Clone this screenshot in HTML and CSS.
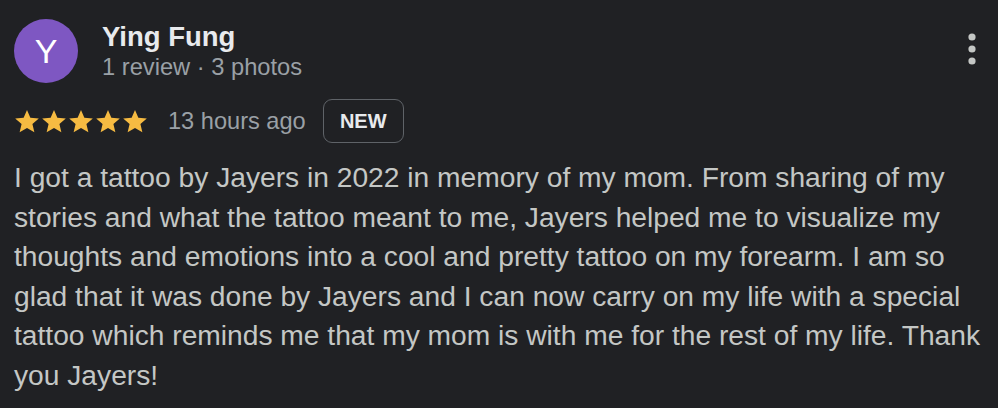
FILE: index.html
```html
<!DOCTYPE html>
<html lang="en">
<head>
<meta charset="utf-8">
<link rel="stylesheet" href="styles.css">
</head>
<body>
<div class="review">
  <div class="header">
    <div class="avatar">Y</div>
    <div class="who">
      <div class="name">Ying Fung</div>
      <div class="meta">1 review · 3 photos</div>
    </div>
    <button class="menu" aria-label="More">
      <svg width="8" height="32" viewBox="0 0 8 32"><circle cx="4" cy="4" r="3.6"/><circle cx="4" cy="16" r="3.6"/><circle cx="4" cy="28" r="3.6"/></svg>
    </button>
  </div>
  <div class="rating">
    <div class="stars">
      <svg viewBox="0 0 24 24" class="star"><path d="M12 1.8l3.1 7.2 7.8.7-5.9 5.1 1.8 7.6L12 18.4l-6.8 4 1.8-7.6-5.9-5.1 7.8-.7z"/></svg>
      <svg viewBox="0 0 24 24" class="star"><path d="M12 1.8l3.1 7.2 7.8.7-5.9 5.1 1.8 7.6L12 18.4l-6.8 4 1.8-7.6-5.9-5.1 7.8-.7z"/></svg>
      <svg viewBox="0 0 24 24" class="star"><path d="M12 1.8l3.1 7.2 7.8.7-5.9 5.1 1.8 7.6L12 18.4l-6.8 4 1.8-7.6-5.9-5.1 7.8-.7z"/></svg>
      <svg viewBox="0 0 24 24" class="star"><path d="M12 1.8l3.1 7.2 7.8.7-5.9 5.1 1.8 7.6L12 18.4l-6.8 4 1.8-7.6-5.9-5.1 7.8-.7z"/></svg>
      <svg viewBox="0 0 24 24" class="star"><path d="M12 1.8l3.1 7.2 7.8.7-5.9 5.1 1.8 7.6L12 18.4l-6.8 4 1.8-7.6-5.9-5.1 7.8-.7z"/></svg>
    </div>
    <span class="time">13 hours ago</span>
    <span class="badge">NEW</span>
  </div>
  <p class="text">I got a tattoo by Jayers in 2022 in memory of my mom. From sharing of my stories and what the tattoo meant to me, Jayers helped me to visualize my thoughts and emotions into a cool and pretty tattoo on my forearm. I am so glad that it was done by Jayers and I can now carry on my life with a special tattoo which reminds me that my mom is with me for the rest of my life. Thank you Jayers!</p>
</div>
</body>
</html>
```

FILE: styles.css
```css
html, body {
  margin: 0;
  padding: 0;
  background: #202124;
}
body {
  font-family: "Liberation Sans", Arial, sans-serif;
  width: 998px;
  height: 408px;
  overflow: hidden;
}
.review {
  padding: 19px 6px 0 14px;
}
.header {
  display: flex;
  align-items: flex-start;
}
.avatar {
  width: 64px;
  height: 64px;
  border-radius: 50%;
  background: #7e57c2;
  color: #ffffff;
  font-size: 34px;
  line-height: 64px;
  text-align: center;
  flex: none;
}
.who {
  margin-left: 24px;
  margin-top: 2.5px;
}
.name {
  color: #e8eaed;
  font-weight: bold;
  font-size: 27.5px;
  line-height: 30px;
}
.meta {
  color: #9aa0a6;
  font-size: 23.7px;
  line-height: 30px;
}
.menu {
  margin-left: auto;
  margin-right: 16px;
  margin-top: 14px;
  padding: 0;
  border: 0;
  background: none;
  width: 8px;
  height: 32px;
  display: flex;
}
.menu svg {
  fill: #c4c7c5;
}
.rating {
  display: flex;
  align-items: center;
  margin-top: 16px;
  height: 44px;
}
.stars {
  display: flex;
  gap: 1px;
}
.star {
  width: 26px;
  height: 26px;
  fill: #f6bb42;
}
.time {
  margin-left: 20px;
  color: #9aa0a6;
  font-size: 23.6px;
}
.badge {
  margin-left: 17px;
  box-sizing: border-box;
  height: 44px;
  width: 81px;
  border: 1.5px solid #5f6368;
  border-radius: 9px;
  color: #e8eaed;
  font-weight: bold;
  font-size: 20px;
  display: flex;
  align-items: center;
  justify-content: center;
}
.text {
  margin: 15px 0 0;
  color: #c4c7c5;
  font-size: 28.2px;
  line-height: 39.6px;
}
```
